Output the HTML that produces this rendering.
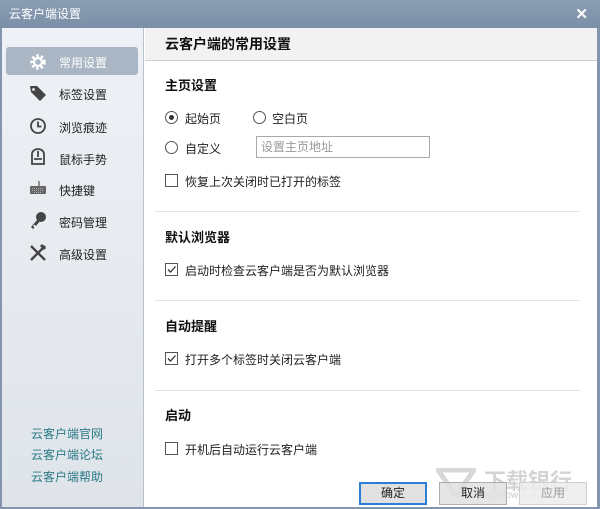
<!DOCTYPE html>
<html><head><meta charset="utf-8"><style>
*{margin:0;padding:0;box-sizing:border-box}
body{width:600px;height:509px;overflow:hidden;font-family:"Liberation Sans","Noto Sans CJK SC",sans-serif;font-size:12px;color:#222;background:#fff;position:relative}
.a{position:absolute;white-space:nowrap}
.title{left:0;top:0;width:600px;height:28px;background:linear-gradient(#8a9db3,#7b8fa7);color:#fff;font-size:12px;line-height:28px;padding-left:9px}
.side{left:0;top:28px;width:144px;height:481px;background:linear-gradient(#eef1f5,#dfe4ea);border-left:2px solid #8396ad;border-right:1px solid #b9c2cc}
.rb{right:0;top:28px;width:3px;height:481px;background:#8396ad}
.bb{left:0;top:507px;width:600px;height:2px;background:#8396ad}
.hdr{left:145px;top:28px;width:452px;height:33px;background:#f2f2f2;border-bottom:1px solid #cfcfcf;font-weight:bold;font-size:14px;line-height:33px;padding-left:20px;color:#111}
.sel{left:6px;top:47px;width:132px;height:28px;background:#aab6c3;border-radius:3px}
.it{font-size:12px;color:#222;left:59px}
.h{font-weight:bold;font-size:13px;left:165px;color:#111}
.sep{left:155px;width:425px;height:1px;background:#dde3ea}
.rad{width:13px;height:13px;border:1px solid #555;border-radius:50%;background:#fff}
.chk{width:13px;height:13px;border:1px solid #555;background:#fff}
.btn{top:482px;width:68px;height:23px;border:1px solid #adadad;background:#e1e1e1;text-align:center;line-height:21px;font-size:12px}
.lk{left:31px;color:#2b7a86;font-size:12px}
</style></head><body>
<div class="a title">云客户端设置</div>
<div class="a" style="right:12px;top:5px;color:#fff;font-size:15px;font-weight:bold">✕</div>
<div class="a side"></div>
<div class="a rb"></div>
<div class="a bb"></div>
<div class="a sel"></div>
<svg class="a" style="left:29px;top:53px" width="18" height="18" viewBox="0 0 18 18"><circle cx="9" cy="9" r="6" fill="none" stroke="#fff" stroke-width="3.5" stroke-dasharray="2.4 2"/><circle cx="9" cy="9" r="4" fill="none" stroke="#fff" stroke-width="2.2"/></svg>
<div class="a it" style="top:54px;color:#fff">常用设置</div>
<svg class="a" style="left:29px;top:85px" width="18" height="17" viewBox="0 0 18 17"><path d="M1 1h7l9 9-6 6-9-9z" fill="#444"/><circle cx="4.5" cy="4.5" r="1.4" fill="#e8ecf1"/></svg>
<div class="a it" style="top:86px">标签设置</div>
<svg class="a" style="left:29px;top:117px" width="18" height="18" viewBox="0 0 18 18"><circle cx="9" cy="9" r="7" fill="none" stroke="#444" stroke-width="1.8"/><path d="M9 4.5V9.5H12.5" fill="none" stroke="#444" stroke-width="1.8"/></svg>
<div class="a it" style="top:119px">浏览痕迹</div>
<svg class="a" style="left:30px;top:148px" width="16" height="18" viewBox="0 0 16 18"><path d="M2 6a6 5 0 0 1 12 0v10H2z" fill="none" stroke="#444" stroke-width="1.8"/><path d="M8 3v6M4 11h8" stroke="#444" stroke-width="1.8"/></svg>
<div class="a it" style="top:151px">鼠标手势</div>
<svg class="a" style="left:29px;top:180px" width="18" height="16" viewBox="0 0 18 16"><path d="M10 1v5" stroke="#555" stroke-width="1.2"/><rect x="1" y="6" width="16" height="8" rx="1" fill="#666"/><path d="M3 8.5h12M3 10.5h12M5 12.5h8" stroke="#ccc" stroke-width="0.8" stroke-dasharray="1 1"/></svg>
<div class="a it" style="top:182px">快捷键</div>
<svg class="a" style="left:29px;top:211px" width="18" height="19" viewBox="0 0 18 19"><circle cx="12" cy="6" r="5" fill="#444"/><path d="M9 8L2 16l2 2 1.5-1.5L4 15l1.5-1.5L7 15l4-5" fill="#444"/></svg>
<div class="a it" style="top:214px">密码管理</div>
<svg class="a" style="left:29px;top:244px" width="18" height="18" viewBox="0 0 18 18"><path d="M2 2l14 14M16 2L2 16" stroke="#444" stroke-width="2.4"/><path d="M12 1l4 4" stroke="#444" stroke-width="3"/></svg>
<div class="a it" style="top:246px">高级设置</div>
<div class="a lk" style="top:425px">云客户端官网</div>
<div class="a lk" style="top:446px">云客户端论坛</div>
<div class="a lk" style="top:468px">云客户端帮助</div>

<div class="a hdr">云客户端的常用设置</div>
<div class="a h" style="top:75px">主页设置</div>
<div class="a rad" style="left:165px;top:111px"></div><div class="a" style="left:169px;top:115px;width:5px;height:5px;border-radius:50%;background:#333"></div>
<div class="a" style="left:185px;top:110px">起始页</div>
<div class="a rad" style="left:253px;top:111px"></div>
<div class="a" style="left:272px;top:110px">空白页</div>
<div class="a rad" style="left:165px;top:141px"></div>
<div class="a" style="left:185px;top:140px">自定义</div>
<div class="a" style="left:256px;top:136px;width:174px;height:22px;border:1px solid #a9a9a9;color:#999;padding-left:4px;line-height:20px">设置主页地址</div>
<div class="a chk" style="left:165px;top:174px"></div>
<div class="a" style="left:185px;top:173px">恢复上次关闭时已打开的标签</div>
<div class="a sep" style="top:211px"></div>
<div class="a h" style="top:227px">默认浏览器</div>
<div class="a chk" style="left:165px;top:263px"></div><svg class="a" style="left:165px;top:263px" width="13" height="13"><path d="M3 6.5l2.5 2.5L10.5 3.5" fill="none" stroke="#333" stroke-width="1.3"/></svg>
<div class="a" style="left:185px;top:262px">启动时检查云客户端是否为默认浏览器</div>
<div class="a sep" style="top:300px"></div>
<div class="a h" style="top:316px">自动提醒</div>
<div class="a chk" style="left:165px;top:352px"></div><svg class="a" style="left:165px;top:352px" width="13" height="13"><path d="M3 6.5l2.5 2.5L10.5 3.5" fill="none" stroke="#333" stroke-width="1.3"/></svg>
<div class="a" style="left:185px;top:351px">打开多个标签时关闭云客户端</div>
<div class="a sep" style="top:390px"></div>
<div class="a h" style="top:405px">启动</div>
<div class="a chk" style="left:165px;top:442px"></div>
<div class="a" style="left:185px;top:441px">开机后自动运行云客户端</div>
<svg class="a" style="left:436px;top:468px" width="40" height="30"><path d="M2 2h36L20 28z" fill="none" stroke="#d8d8d8" stroke-width="5"/></svg>
<div class="a" style="left:484px;top:464px;font-size:22px;color:#d4d4d4;font-weight:bold">下载银行</div>
<div class="a" style="left:476px;top:490px;font-size:10px;color:#ccc">www.downxia.cn</div>
<div class="a btn" style="left:359px;border:2px solid #2a7fd4;line-height:19px">确定</div>
<div class="a btn" style="left:439px;background:rgba(225,225,225,.85)">取消</div>
<div class="a btn" style="left:519px;color:#999;background:rgba(236,236,236,.85);border-color:#cfcfcf">应用</div>
</body></html>
